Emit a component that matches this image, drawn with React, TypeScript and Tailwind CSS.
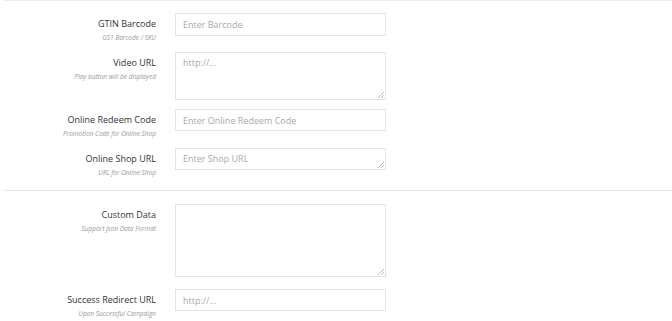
import React from "react";

type Row = {
  label: string;
  sub: string;
  kind: "input" | "textarea";
  placeholder: string;
  h: string;
  mb: string;
};

const rows1: Row[] = [
  { label: "GTIN Barcode", sub: "GS1 Barcode / SKU", kind: "input", placeholder: "Enter Barcode", h: "h-[23px]", mb: "mb-[10px]" },
  { label: "Video URL", sub: "Play button will be displayed", kind: "textarea", placeholder: "http://...", h: "h-[48px]", mb: "mb-[9px]" },
  { label: "Online Redeem Code", sub: "Promotion Code for Online Shop", kind: "input", placeholder: "Enter Online Redeem Code", h: "h-[22px]", mb: "mb-[10px]" },
  { label: "Online Shop URL", sub: "URL for Online Shop", kind: "textarea", placeholder: "Enter Shop URL", h: "h-[22px]", mb: "mb-0" },
];

const rows2: Row[] = [
  { label: "Custom Data", sub: "Support Json Data Format", kind: "textarea", placeholder: "", h: "h-[73px]", mb: "mb-[12px]" },
  { label: "Success Redirect URL", sub: "Upon Successful Campaign", kind: "input", placeholder: "http://...", h: "h-[22px]", mb: "mb-0" },
];

function Grip() {
  return (
    <svg className="pointer-events-none absolute bottom-[2px] right-[2px]" width="6" height="6" viewBox="0 0 6 6">
      <path d="M6 0L0 6M6 3L3 6" stroke="#b5b5b5" strokeWidth="0.9" />
    </svg>
  );
}

function FormRow({ r }: { r: Row }) {
  const field =
    "w-[211px] border border-[#e3e3e3] bg-white px-[7px] text-[9px] text-[#555] placeholder:text-[#a9a9a9] outline-none";
  return (
    <div className={`flex items-start ${r.mb}`}>
      <div className="w-[156px] shrink-0 pt-[5px] text-right">
        <div className="text-[9px] leading-[12px] text-[#333]">{r.label}</div>
        <div className="mt-[4px] text-[6.5px] italic leading-[8px] text-[#999]">{r.sub}</div>
      </div>
      <div className="relative ml-[19px]">
        {r.kind === "input" ? (
          <input className={`${field} ${r.h} block`} placeholder={r.placeholder} />
        ) : (
          <>
            <textarea className={`${field} ${r.h} block resize-none py-[3px] leading-[14px]`} placeholder={r.placeholder} />
            <Grip />
          </>
        )}
      </div>
    </div>
  );
}

export default function App() {
  return (
    <div className="h-[321px] w-[672px] overflow-hidden bg-white" style={{ fontFamily: '"Open Sans", "Noto Sans", sans-serif' }}>
      <div className="ml-[3px] border-t border-[#eeeeee]" />
      <div className="pt-[12px]">
        {rows1.map((r) => (
          <FormRow key={r.label} r={r} />
        ))}
      </div>
      <div className="ml-[3px] mt-[13px] border-t border-[#e6e6e6]" />
      <div className="pt-[13px]">
        {rows2.map((r) => (
          <FormRow key={r.label} r={r} />
        ))}
      </div>
    </div>
  );
}
